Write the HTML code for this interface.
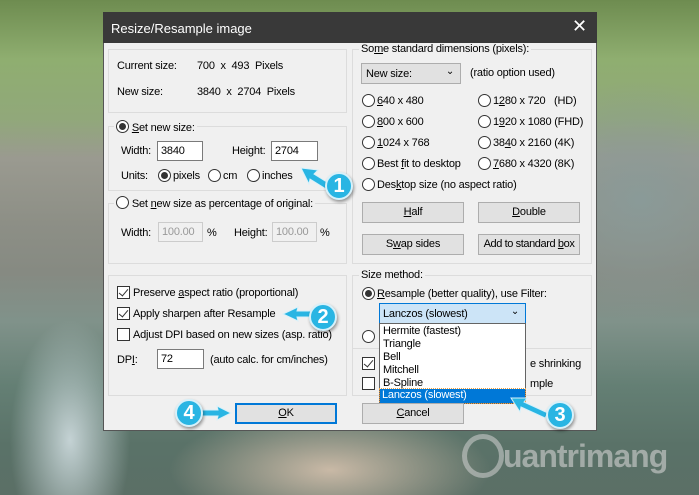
<!DOCTYPE html>
<html><head><meta charset="utf-8"><style>
*{margin:0;padding:0;box-sizing:border-box}
body{width:699px;height:495px;overflow:hidden;position:relative;font-family:"Liberation Sans",sans-serif;font-size:11px;letter-spacing:-0.2px;color:#000;
background:
radial-gradient(ellipse 60px 120px at 70px 440px,#c4d2d4 0%,rgba(180,200,200,0) 100%),
radial-gradient(ellipse 160px 60px at 330px 470px,#c9b9a6 0%,rgba(190,170,150,0) 100%),
radial-gradient(ellipse 140px 120px at 640px 200px,#8a9a98 0%,rgba(130,150,150,0) 100%),
linear-gradient(180deg,#6e8c50 0%,#8fae70 12%,#91a87a 24%,#9a9a90 32%,#8d8f86 45%,#868a82 55%,#80928a 65%,#647f74 78%,#5a7268 90%,#5b6f66 100%);}
.a{position:absolute}
.dlg{left:103px;top:12px;width:494px;height:419px;background:#f0f0f0;border:1px solid #555;}
.title{left:103px;top:12px;width:494px;height:31px;background:#393939;color:#fff;font-size:13px;letter-spacing:0;padding:9px 0 0 8px}
.grp{position:absolute;border:1px solid #dcdcdc}
.lbl{position:absolute;background:#f0f0f0;padding:0 2px;white-space:nowrap}
.t{position:absolute;white-space:nowrap;line-height:14px}
.in{position:absolute;background:#fff;border:1px solid #7a7a7a;height:20px;padding:3px 0 0 3px}
.dis{background:#f0f0f0;border-color:#ccc;color:#999}
.r{position:absolute;width:13px;height:13px;border:1px solid #333;border-radius:50%;background:#fff}
.r.on::after{content:"";position:absolute;left:2px;top:2px;width:7px;height:7px;border-radius:50%;background:#333}
.c{position:absolute;width:13px;height:13px;border:1px solid #333;background:#fff}
.c.on::after{content:"";position:absolute;left:3px;top:0px;width:4px;height:8px;border:solid #333;border-width:0 1.5px 1.5px 0;transform:rotate(40deg)}
.btn{position:absolute;background:#e1e1e1;border:1px solid #adadad;text-align:center;line-height:19px;height:21px;white-space:nowrap}
.circ{position:absolute;width:28px;height:28px;border-radius:50%;background:#29b5e3;border:2px solid #d7f1fa;color:#fff;font-size:20px;font-weight:bold;text-align:center;line-height:24px;letter-spacing:0;box-shadow:1px 2px 3px rgba(0,0,0,.4)}
u{text-decoration:underline}
</style></head><body>
<div class="a dlg"></div>
<div class="a title">Resize/Resample image</div>
<div class="a" style="left:572px;top:16px;color:#fff;font-size:18px">✕</div>

<div class="grp" style="left:108px;top:49px;width:239px;height:64px"></div>
<div class="t" style="left:117px;top:59px">Current size:</div><div class="t" style="left:197px;top:59px">700 &nbsp;x &nbsp;493 &nbsp;Pixels</div>
<div class="t" style="left:117px;top:85px">New size:</div><div class="t" style="left:197px;top:85px">3840 &nbsp;x &nbsp;2704 &nbsp;Pixels</div>

<div class="grp" style="left:108px;top:126px;width:239px;height:65px"></div>
<div class="lbl" style="left:114px;top:120px"><span class="r on" style="position:relative;display:inline-block;vertical-align:-2px"></span> <u>S</u>et new size:</div>
<div class="t" style="left:121px;top:144px">Width:</div><div class="in" style="left:157px;top:141px;width:46px">3840</div>
<div class="t" style="left:232px;top:144px">Height:</div><div class="in" style="left:271px;top:141px;width:47px">2704</div>
<div class="t" style="left:121px;top:169px">Units:</div>
<div class="r on" style="left:158px;top:169px"></div><div class="t" style="left:173px;top:169px">pixels</div>
<div class="r" style="left:208px;top:169px"></div><div class="t" style="left:223px;top:169px">cm</div>
<div class="r" style="left:247px;top:169px"></div><div class="t" style="left:262px;top:169px">inches</div>

<div class="grp" style="left:108px;top:203px;width:239px;height:61px"></div>
<div class="lbl" style="left:114px;top:196px"><span class="r" style="position:relative;display:inline-block;vertical-align:-2px"></span> Set <u>n</u>ew size as percentage of original:</div>
<div class="t" style="left:121px;top:226px">Width:</div><div class="in dis" style="left:158px;top:222px;width:45px">100.00</div><div class="t" style="left:207px;top:226px">%</div>
<div class="t" style="left:234px;top:226px">Height:</div><div class="in dis" style="left:272px;top:222px;width:45px">100.00</div><div class="t" style="left:320px;top:226px">%</div>

<div class="grp" style="left:108px;top:275px;width:239px;height:121px"></div>
<div class="c on" style="left:117px;top:286px"></div><div class="t" style="left:133px;top:286px">Preserve <u>a</u>spect ratio (proportional)</div>
<div class="c on" style="left:117px;top:307px"></div><div class="t" style="left:133px;top:307px">Apply sharpen after Resample</div>
<div class="c" style="left:117px;top:328px"></div><div class="t" style="left:133px;top:328px">Adjust DPI based on new sizes (asp. ratio)</div>
<div class="t" style="left:117px;top:353px">DP<u>I</u>:</div><div class="in" style="left:157px;top:349px;width:47px">72</div>
<div class="t" style="left:210px;top:353px">(auto calc. for cm/inches)</div>

<div class="grp" style="left:352px;top:49px;width:240px;height:215px"></div>
<div class="lbl" style="left:359px;top:43px">So<u>m</u>e standard dimensions (pixels):</div>
<div class="a" style="left:361px;top:63px;width:100px;height:21px;background:#e1e1e1;border:1px solid #adadad;padding:4px 0 0 4px">New size:<span style="position:absolute;right:6px;top:2px;font-size:10px">&#8964;</span></div>
<div class="t" style="left:470px;top:66px">(ratio option used)</div>
<div class="r" style="left:362px;top:94px"></div><div class="t" style="left:377px;top:94px"><u>6</u>40 x 480</div>
<div class="r" style="left:478px;top:94px"></div><div class="t" style="left:493px;top:94px">1<u>2</u>80 x 720 &nbsp;&nbsp;(HD)</div>
<div class="r" style="left:362px;top:115px"></div><div class="t" style="left:377px;top:115px"><u>8</u>00 x 600</div>
<div class="r" style="left:478px;top:115px"></div><div class="t" style="left:493px;top:115px">1<u>9</u>20 x 1080 (FHD)</div>
<div class="r" style="left:362px;top:136px"></div><div class="t" style="left:377px;top:136px"><u>1</u>024 x 768</div>
<div class="r" style="left:478px;top:136px"></div><div class="t" style="left:493px;top:136px">38<u>4</u>0 x 2160 (4K)</div>
<div class="r" style="left:362px;top:157px"></div><div class="t" style="left:377px;top:157px">Best <u>f</u>it to desktop</div>
<div class="r" style="left:478px;top:157px"></div><div class="t" style="left:493px;top:157px"><u>7</u>680 x 4320 (8K)</div>
<div class="r" style="left:362px;top:178px"></div><div class="t" style="left:377px;top:178px">Des<u>k</u>top size (no aspect ratio)</div>
<div class="btn" style="left:362px;top:202px;width:102px"><u>H</u>alf</div>
<div class="btn" style="left:478px;top:202px;width:102px"><u>D</u>ouble</div>
<div class="btn" style="left:362px;top:234px;width:102px">S<u>w</u>ap sides</div>
<div class="btn" style="left:478px;top:234px;width:102px;letter-spacing:-0.4px">Add to standard <u>b</u>ox</div>

<div class="grp" style="left:352px;top:275px;width:240px;height:121px"></div>
<div class="lbl" style="left:359px;top:269px">Size method:</div>
<div class="r on" style="left:362px;top:287px"></div><div class="t" style="left:377px;top:287px"><u>R</u>esample (better quality), use Filter:</div>
<div class="r" style="left:362px;top:330px"></div>
<div class="a" style="left:352px;top:348px;width:240px;border-top:1px solid #dcdcdc"></div>
<div class="c on" style="left:362px;top:357px"></div><div class="t" style="left:530px;top:357px">e shrinking</div>
<div class="c" style="left:362px;top:377px"></div><div class="t" style="left:530px;top:377px">mple</div>

<div class="a" style="left:379px;top:303px;width:147px;height:21px;background:#cce4f7;border:1px solid #0078d7;padding:4px 0 0 3px">Lanczos (slowest)<span style="position:absolute;right:6px;top:2px;font-size:10px">&#8964;</span></div>
<div class="a" style="left:379px;top:323px;width:147px;height:81px;background:#fff;border:1px solid #646464;line-height:13px;padding-left:3px">
<div style="padding-top:1px">Hermite (fastest)</div><div>Triangle</div><div>Bell</div><div>Mitchell</div><div>B-Spline</div>
</div>
<div class="a" style="left:380px;top:389px;width:145px;height:14px;background:#0078d7;color:#fff;padding-left:2px;line-height:13px;outline:1px dotted #f0a040">Lanczos (slowest)</div>

<div class="btn" style="left:235px;top:403px;width:102px;border:2px solid #0078d7;line-height:17px"><u>O</u>K</div>
<div class="btn" style="left:362px;top:403px;width:102px"><u>C</u>ancel</div>

<svg class="a" style="left:0;top:0" width="699" height="495">
<g fill="#29b5e3" stroke="#d7f1fa" stroke-width="1">
<polygon points="301,168 318,170 314,174 330,184 326,189 310,179 309,184"/>
<polygon points="283,314 298,307 297,311 312,311 312,317 297,317 298,321"/>
<polygon points="511,398 527,398 524,402 548,413 545,418 521,407 520,412"/>
<polygon points="231,413 217,406 218,410 200,410 200,416 218,416 217,420"/>
</g>
</svg>
<div class="circ" style="left:325px;top:172px">1</div>
<div class="circ" style="left:309px;top:303px">2</div>
<div class="circ" style="left:546px;top:401px">3</div>
<div class="circ" style="left:175px;top:399px">4</div>

<div class="a" style="left:462px;top:434px;width:42px;height:44px;border:5px solid rgba(210,210,210,.55);border-radius:50%"></div>
<div class="a" style="left:503px;top:438px;font-size:32px;font-weight:bold;color:rgba(210,210,210,.6);letter-spacing:-1px">uantrimang</div>
</body></html>
